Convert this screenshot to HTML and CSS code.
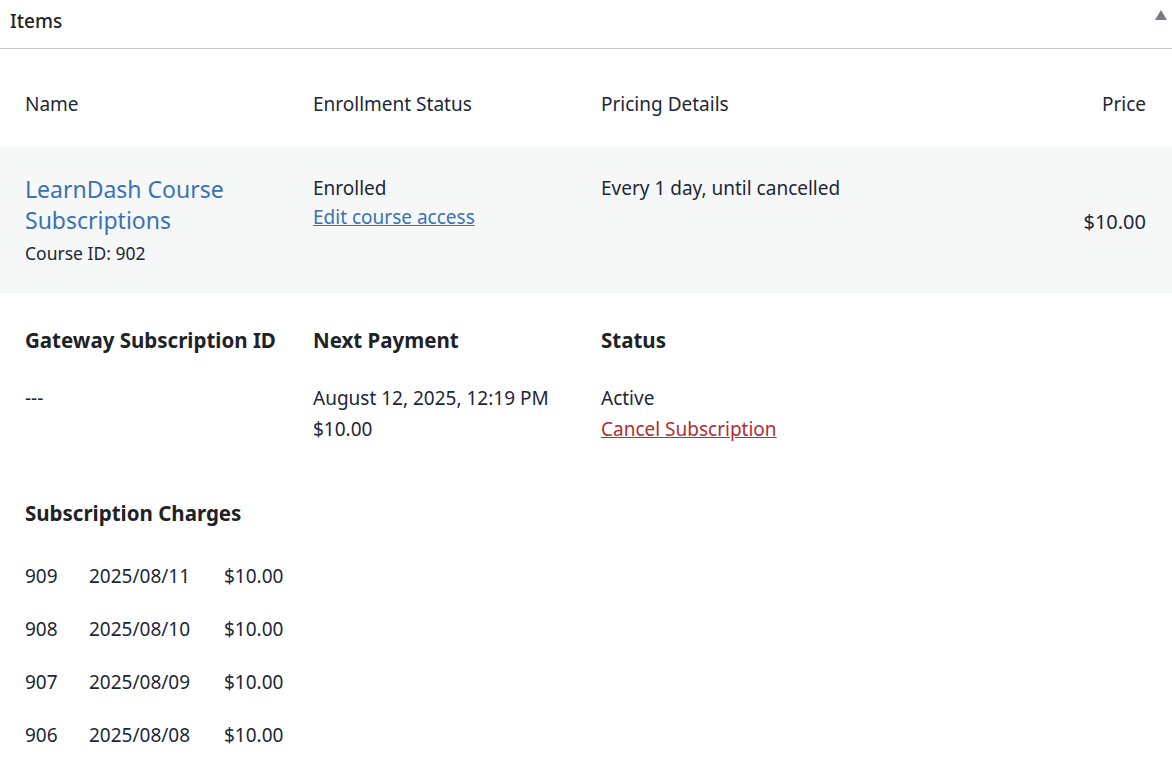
FILE: index.html
```html
<!DOCTYPE html>
<html>
<head>
    <meta charset="utf-8">
    <title>Items</title>
    <link rel="stylesheet" href="styles.css">
</head>
<body>
    <div class="postbox">
        <div class="postbox-header">
            <h2>Items</h2>
            <span class="toggle"></span>
        </div>
        <table class="items">
            <thead>
                <tr>
                    <th>Name</th>
                    <th>Enrollment Status</th>
                    <th>Pricing Details</th>
                    <th class="price">Price</th>
                </tr>
            </thead>
            <tbody>
                <tr class="item">
                    <td>
                        <a class="title" href="#">LearnDash Course Subscriptions</a>
                        <div class="meta">Course ID: 902</div>
                    </td>
                    <td>
                        Enrolled<br>
                        <a class="link" href="#">Edit course access</a>
                    </td>
                    <td class="nowrap">Every 1 day, until cancelled</td>
                    <td class="price amount">$10.00</td>
                </tr>
            </tbody>
        </table>
        <div class="subscription">
            <div class="col">
                <h3>Gateway Subscription ID</h3>
                <p>---</p>
            </div>
            <div class="col">
                <h3>Next Payment</h3>
                <p>August 12, 2025, 12:19 PM<br>$10.00</p>
            </div>
            <div class="col">
                <h3>Status</h3>
                <p>Active<br><a class="cancel" href="#">Cancel Subscription</a></p>
            </div>
        </div>
        <div class="charges">
            <h3>Subscription Charges</h3>
            <div class="charge"><span>909</span><span>2025/08/11</span><span>$10.00</span></div>
            <div class="charge"><span>908</span><span>2025/08/10</span><span>$10.00</span></div>
            <div class="charge"><span>907</span><span>2025/08/09</span><span>$10.00</span></div>
            <div class="charge"><span>906</span><span>2025/08/08</span><span>$10.00</span></div>
        </div>
    </div>
</body>
</html>
```
FILE: styles.css
```css
body
{
    margin: 0;
    background: #fff;
    color: #1d2738;
    font-family: "Noto Sans", "Open Sans", sans-serif;
    font-size: 19px;
}
a
{
    text-decoration: none;
}
.postbox-header
{
    display: flex;
    justify-content: space-between;
    align-items: center;
    height: 49px;
    border-bottom: 1px solid #c3c4c7;
    padding: 0 5px 0 10px;
    box-sizing: border-box;
}
.postbox-header h2
{
    margin: 0 0 6px 0;
    font-size: 19px;
    font-weight: 500;
    color: #1d2327;
}
.toggle
{
    width: 0;
    height: 0;
    border-left: 6px solid transparent;
    border-right: 6px solid transparent;
    border-bottom: 10px solid #787c82;
    margin: 0 0 18px 0;
}
.items
{
    width: 100%;
    border-collapse: collapse;
}
.items th
{
    text-align: left;
    font-weight: normal;
    padding: 43px 25px 30px 25px;
    line-height: 24px;
    width: 238px;
}
.items td
{
    vertical-align: top;
    padding: 28px 25px;
    line-height: 29px;
}
.items td.nowrap
{
    white-space: nowrap;
}
.items .price
{
    text-align: right;
    width: auto;
    padding-right: 26px;
}
.item
{
    background: #f6f7f7;
}
.item .amount
{
    vertical-align: middle;
    font-size: 20px;
    padding-top: 31px;
}
.title
{
    display: block;
    color: #3a72b5;
    font-size: 23px;
    line-height: 31px;
}
.meta
{
    font-size: 17.5px;
    line-height: 24px;
    margin-top: 5px;
}
.link
{
    color: #3a72b5;
    text-decoration: underline;
}
.subscription
{
    display: flex;
    padding: 31px 0 0 25px;
}
.col
{
    width: 288px;
}
h3
{
    margin: 0;
    font-size: 20.5px;
    font-weight: bold;
    line-height: 32px;
    color: #1d2327;
}
.col p
{
    margin: 27px 0 0 0;
    line-height: 31px;
}
.cancel
{
    color: #b32d2e;
    text-decoration: underline;
}
.charges
{
    padding: 52px 25px 0 25px;
}
.charges h3
{
    margin-bottom: 21px;
}
.charge
{
    display: flex;
    line-height: 53px;
}
.charge span:nth-child(1)
{
    width: 64px;
}
.charge span:nth-child(2)
{
    width: 135px;
}
```
